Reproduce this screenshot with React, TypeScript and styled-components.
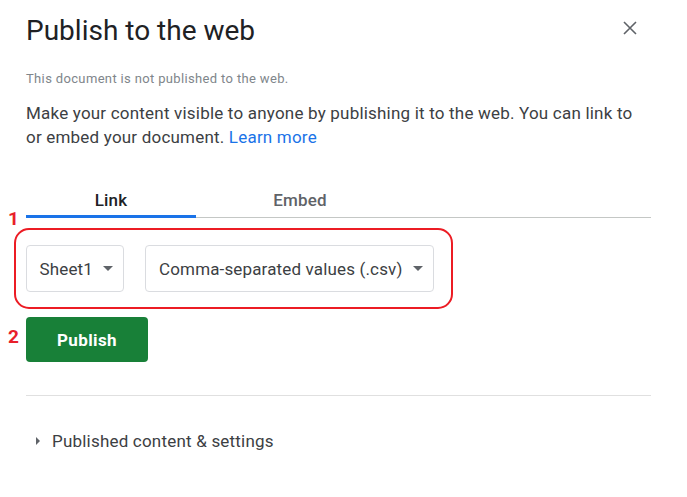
import styled, { createGlobalStyle } from "styled-components";

const GlobalStyle = createGlobalStyle`
  html, body {
    margin: 0;
    padding: 0;
    background: #ffffff;
    font-family: Roboto, "Liberation Sans", Arial, sans-serif;
  }
`;

const Dialog = styled.div`
  position: relative;
  width: 687px;
  height: 497px;
  box-sizing: border-box;
  padding: 12px 36px 0 26px;
  background: #fff;
`;

const Header = styled.div`
  display: flex;
  align-items: center;
  justify-content: space-between;
  height: 36px;
`;

const Title = styled.h1`
  margin: 0;
  font-size: 28px;
  font-weight: 400;
  color: #202124;
`;

const CloseButton = styled.button`
  display: flex;
  align-items: center;
  justify-content: center;
  width: 24px;
  height: 24px;
  margin: -4px 9px 0 0;
  padding: 0;
  border: none;
  background: none;
  cursor: pointer;
`;

const Status = styled.p`
  margin: 23px 0 0;
  font-size: 13px;
  line-height: 16px;
  letter-spacing: 0.35px;
  color: #80868b;
`;

const Description = styled.p`
  margin: 14px 0 0;
  font-size: 17px;
  line-height: 24px;
  letter-spacing: 0.2px;
  color: #3c4043;
`;

const LearnMore = styled.a`
  color: #1a73e8;
  text-decoration: none;
`;

const Tabs = styled.div`
  display: flex;
  margin-top: 32px;
  border-bottom: 1px solid #c4c7c5;
`;

const Tab = styled.div<{ $active?: boolean; $width: number }>`
  width: ${(p) => p.$width}px;
  padding: 9px 0 5px;
  text-align: center;
  font-size: 17px;
  font-weight: 500;
  line-height: 20px;
  letter-spacing: 0.2px;
  color: ${(p) => (p.$active ? "#202124" : "#5f6368")};
  border-bottom: 3px solid ${(p) => (p.$active ? "#1a73e8" : "transparent")};
  margin-bottom: -1px;
`;

const Step = styled.span<{ $top: number }>`
  position: absolute;
  left: 8px;
  top: ${(p) => p.$top}px;
  font-size: 19px;
  font-weight: 700;
  color: #e8202a;
  line-height: 20px;
`;

const Highlight = styled.div`
  display: flex;
  gap: 21px;
  width: fit-content;
  margin: 10px 0 0 -12px;
  padding: 15px 17px 15px 9.5px;
  border: 2.5px solid #ec1c24;
  border-radius: 15px;
`;

const Select = styled.div`
  display: flex;
  align-items: center;
  gap: 10px;
  height: 47px;
  box-sizing: border-box;
  padding: 0 10px 0 13px;
  border: 1px solid #dadce0;
  border-radius: 4px;
  font-size: 17px;
  letter-spacing: 0.15px;
  color: #3c4043;
`;

const Caret = styled.span`
  width: 0;
  height: 0;
  border-left: 5px solid transparent;
  border-right: 5px solid transparent;
  border-top: 5px solid #5f6368;
`;

const PublishButton = styled.button`
  display: block;
  width: 122px;
  height: 45px;
  margin-top: 8px;
  border: none;
  border-radius: 4px;
  background: #188038;
  color: #fff;
  font-family: inherit;
  font-size: 17px;
  font-weight: 700;
  letter-spacing: 0.4px;
  cursor: pointer;
`;

const Divider = styled.hr`
  margin: 33px 0 0;
  border: none;
  border-top: 1px solid #e0e0e0;
`;

const Disclosure = styled.div`
  display: flex;
  align-items: center;
  gap: 12px;
  margin-top: 35px;
  padding-left: 10px;
  font-size: 17px;
  letter-spacing: 0.2px;
  color: #3c4043;
`;

const Arrow = styled.span`
  width: 0;
  height: 0;
  border-top: 4px solid transparent;
  border-bottom: 4px solid transparent;
  border-left: 4px solid #5f6368;
`;

export default function App() {
  return (
    <>
      <GlobalStyle />
      <Dialog>
        <Header>
          <Title>Publish to the web</Title>
          <CloseButton aria-label="Close">
            <svg width="14" height="14" viewBox="0 0 14 14">
              <path d="M1 1L13 13M13 1L1 13" stroke="#5f6368" strokeWidth="1.6" />
            </svg>
          </CloseButton>
        </Header>
        <Status>This document is not published to the web.</Status>
        <Description>
          Make your content visible to anyone by publishing it to the web. You can link to
          or embed your document. <LearnMore href="#">Learn more</LearnMore>
        </Description>
        <Tabs>
          <Tab $active $width={170}>Link</Tab>
          <Tab $width={208}>Embed</Tab>
        </Tabs>
        <Step $top={209}>1</Step>
        <Highlight>
          <Select>
            Sheet1 <Caret />
          </Select>
          <Select>
            Comma-separated values (.csv) <Caret />
          </Select>
        </Highlight>
        <Step $top={327}>2</Step>
        <PublishButton>Publish</PublishButton>
        <Divider />
        <Disclosure>
          <Arrow />
          Published content &amp; settings
        </Disclosure>
      </Dialog>
    </>
  );
}
